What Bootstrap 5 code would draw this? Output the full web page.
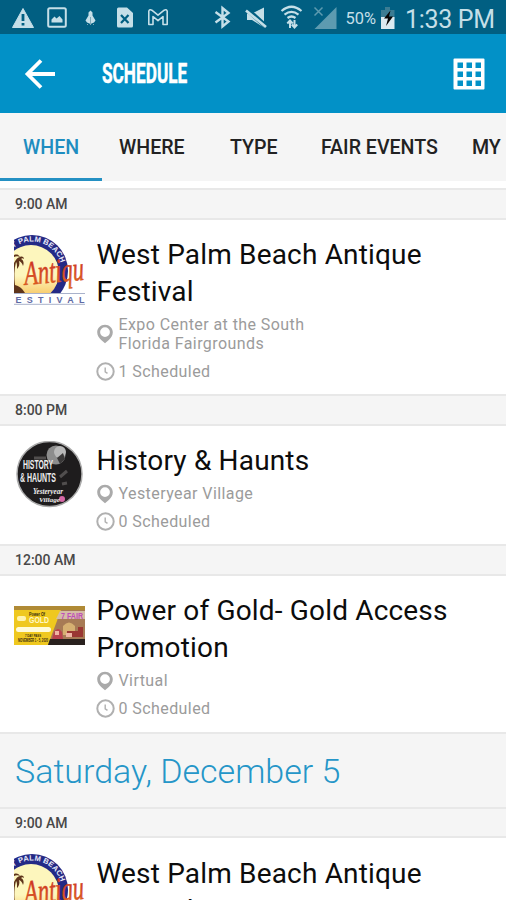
<!DOCTYPE html>
<html lang="en">
<head>
<meta charset="utf-8">
<meta name="viewport" content="width=device-width, initial-scale=1">
<title>Schedule</title>
<link href="https://cdn.jsdelivr.net/npm/bootstrap@5.3.0/dist/css/bootstrap.min.css" rel="stylesheet">
<style>
body{font-family:Roboto,"Open Sans",sans-serif;background:#fff;height:900px;overflow:hidden;color:#111}
svg{display:block;flex:none}
.status-bar{height:34px;background:#015f82;color:#c5dfe8}
.app-header{height:79px;background:#0291c7;color:#fff;padding:0 21px 0 24px}
.app-title{font-size:28px;font-weight:700;line-height:34px;width:86px;margin-left:46px}
.app-title span{display:inline-block;transform-origin:0 50%;transform:scaleX(.615);-webkit-text-stroke:.5px #fff}
.tabs{height:68px;background:#f5f5f5;font-size:19.6px;font-weight:500;white-space:nowrap;overflow:hidden;margin-bottom:7px}
.tab{color:#222;line-height:69px;height:68px;text-decoration:none;flex:none}
.tab.current{color:#1e8dc0;border-bottom:3px solid #2490c3;width:102px;padding-left:23px;margin-right:17px}
.t-where{width:111px}.t-type{width:91px}.t-fair{width:151px}
.time-bar{height:31.5px;background:#f5f5f5;border-top:2px solid #e8e8e8;border-bottom:2px solid #e8e8e8;font-size:14px;font-weight:500;line-height:28px;padding-left:15px;color:#484848}
.event{padding:16.5px 0 13.2px 14px}
.thumb{width:71px;margin-right:11.5px;margin-top:-1px}
.event-name{font-size:28px;line-height:37px;font-weight:400;letter-spacing:.17px;margin:0;color:#0c0c0c}
.meta{font-size:16px;line-height:19.5px;letter-spacing:.42px;color:#9b9b9b}
.place{margin-top:4.5px}.sched{margin-top:8px}
.day{height:75px;background:#f5f5f5;border-top:2px solid #e8e8e8;font-size:34px;font-weight:300;line-height:75px;color:#2596c8;padding-left:15px;margin:0}
.clock{margin-left:-1px}
</style>
</head>
<body>
<svg width="0" height="0" class="position-absolute" aria-hidden="true">
<defs>
<symbol id="pin" viewBox="0 0 16 20"><path fill-rule="evenodd" fill="#aaa" d="M8 .8C3.700.8.2 4 .2 8.300c0 3 1.700 5.500 4 7.600L8 19.300l3.800-3.400c2.300-2.100 4-4.600 4-7.600C15.800 4 12.300.8 8 .8zM8 3.200a4.900 4.900 0 1 1 0 9.800A4.900 4.900 0 0 1 8 3.200z"/></symbol>
<symbol id="clk" viewBox="0 0 19 19"><circle cx="9.500" cy="9.500" r="8.200" fill="none" stroke="#b0b0b0" stroke-width="2"/><path d="M9.200 5.500v4.300l2.300 1.600" fill="none" stroke="#b0b0b0" stroke-width="1.400"/></symbol>
<linearGradient id="sun" x1="0" y1="0" x2="0" y2="1"><stop offset=".55" stop-color="#fdf6bd"/><stop offset="1" stop-color="#f6bc50"/></linearGradient>
<linearGradient id="ink" x1="0" y1="0" x2="0" y2="1"><stop offset="0" stop-color="#c8202a"/><stop offset="1" stop-color="#e2701c"/></linearGradient>
<symbol id="antique" viewBox="0 0 71 70">
<clipPath id="disc"><rect width="71" height="58"/></clipPath>
<g clip-path="url(#disc)">
<circle cx="18" cy="36" r="36" fill="#242a86"/><circle cx="17" cy="38" r="28" fill="url(#sun)"/>
<path d="M0 28c2-4 4-6 6-6-2-1-4-1-6 0v-2c3-1 5 0 6 2 2-1 4 0 4 2-1-1-2-1-3 0 3 1 3 5 2 7-1-3-2-4-4-5 1 3 0 6-2 8 0-4 0-6-1-7-2 8-2 15-1 23 4 1 7 3 10 8H0z" fill="#5e341b"/>
</g>
<path id="arc" d="M-4.200 16.500A29.800 29.800 0 0 1 47.800 37" fill="none"/>
<text font-family="Liberation Sans" font-size="7.500" font-weight="700" fill="#e8eafa"><textPath href="#arc" startOffset="5" textLength="58">T PALM BEACH</textPath></text>
<text x="11" y="50" font-family="Liberation Serif" font-style="italic" font-size="34" textLength="60" lengthAdjust="spacingAndGlyphs" fill="url(#ink)" stroke="#d04422" stroke-width=".5" transform="rotate(-5 11 50)">Antiqu</text>
<path d="M0 58.500h71M0 69.300h71" stroke="#a9b2cb" stroke-width="1"/>
<text x="1.500" y="67.500" font-family="Liberation Sans" font-size="9" font-weight="700" textLength="69" fill="#5f6aa5">ESTIVAL</text>
</symbol>
</defs>
</svg>

<div class="status-bar">
<svg width="506" height="34" viewBox="0 0 506 34" fill="none" stroke="#c5dfe8">
<path d="M23 8.500L33.500 27.500h-21z" fill="#c5dfe8" stroke="#c5dfe8" stroke-linejoin="round"/><path d="M23 14v7M23 23v2.500" stroke="#015f82" stroke-width="2.800"/>
<rect x="48.200" y="8.200" width="17.600" height="18.600" rx="1.500" stroke-width="2"/><path d="M51.500 22.500v-3l3-3 2 2 3-2.500 3 3.500v3z" fill="#c5dfe8" stroke="none"/>
<path d="M90.500 10.500l2 2v3l3 5-1.500 2-3.500 1.500-3.500-1.500-1.500-2 3-5v-3z" fill="#c5dfe8" stroke="none"/><path d="M88 24l-1 1M93 24l1 1M90.500 17v8" stroke="#7fa9b9"/>
<path d="M117 9q0-1.500 1.500-1.500h8.500l6 5.500v13q0 1.500-1.500 1.500h-13q-1.500 0-1.500-1.500z" fill="#c5dfe8" stroke="none"/><path d="M121 15l7.500 8M128.500 15l-7.500 8" stroke="#015f82" stroke-width="2.200"/>
<path d="M148.800 24.500v-13.500q1-2 3-.8l6.200 5 6.200-5q2-1.200 3 .8v13.500h-4.200v-8l-5 4.200-5-4.200v8z" stroke-width="1.600" stroke-linejoin="round"/>
<path d="M215.500 12l13 9.500-6 5V8l6 5-13 9.500" stroke-width="2.400"/>
<path d="M247 13.500h5l12-6v20l-12-7.500h-5z" fill="#c5dfe8" stroke="none"/><path d="M246 8.500l20 18" stroke="#015f82" stroke-width="5"/><path d="M246 10.500l20 16.500" stroke-width="2.700"/>
<path d="M281.500 11q10-8.500 20 0M284.500 14.700q7-5.500 14 0M287.500 18q4-3 8 0" stroke-width="2.200"/><path d="M290 28v-7M287.300 23.500l2.700-3 2.700 3M294.500 20v7M291.800 24.500l2.700 3 2.700-3" stroke-width="2"/>
<path d="M336.500 7v22h-22z" fill="#5d9bb0" stroke="none"/><path d="M314.500 7.500l8 8M322.500 7.500l-8 8" stroke="#5d9bb0" stroke-width="1.500"/>
<path d="M381 10h4V7h5v3h4.500v9H381z" fill="#3b7c93" stroke="none"/><path d="M381 17h13.500v12H381z" fill="#dceaf0" stroke="none"/><path d="M390.500 10.500l-6.500 8h4l-2 7.500 7-9.500h-4z" fill="#050505" stroke="none"/>
<g fill="#c5dfe8" stroke="none" font-family="Roboto, sans-serif"><text x="345.500" y="24" font-size="17" textLength="30.500" lengthAdjust="spacingAndGlyphs">50%</text><text x="405" y="27.500" font-size="25" textLength="90">1:33 PM</text></g>
</svg>
</div>

<header class="app-header d-flex align-items-center">
<svg width="32" height="32" viewBox="0 0 32 32" fill="none" stroke="#fff" stroke-width="3.800"><path d="M31 16H4M17 2.500L3.500 16 17 29.500"/></svg>
<h1 class="app-title mb-0"><span>SCHEDULE</span></h1>
<svg class="ms-auto" width="32" height="32" viewBox="0 0 32 32"><path fill="#fff" fill-rule="evenodd" d="M1.500.5h29q1 0 1 1v29q0 1-1 1h-29q-1 0-1-1v-29q0-1 1-1zM4.500 4.500v5.500h5.500V4.500zM13.500 4.500v5.500h5.500V4.500zM22.500 4.500v5.500h5.500V4.500zM4.500 13.500v5.500h5.500v-5.500zM13.500 13.500v5.500h5.500v-5.500zM22.500 13.500v5.500h5.500v-5.500zM4.500 22.500V28h5.500v-5.500zM13.500 22.500V28h5.500v-5.500zM22.500 22.500V28h5.500v-5.500z"/></svg>
</header>

<nav class="tabs d-flex">
<a class="tab current">WHEN</a><a class="tab t-where">WHERE</a><a class="tab t-type">TYPE</a><a class="tab t-fair">FAIR EVENTS</a><a class="tab">MY</a>
</nav>

<main>
<div class="time-bar">9:00 AM</div>
<article class="event d-flex">
<svg class="thumb" height="70"><use href="#antique"/></svg>
<div><h2 class="event-name">West Palm Beach Antique<br>Festival</h2>
<div class="meta place d-flex align-items-center"><svg class="me-1" width="18" height="20"><use href="#pin" width="16" height="20"/></svg><span>Expo Center at the South<br>Florida Fairgrounds</span></div>
<div class="meta sched d-flex align-items-center"><svg class="clock me-1" width="19" height="19"><use href="#clk"/></svg><span>1 Scheduled</span></div></div>
</article>

<div class="time-bar">8:00 PM</div>
<article class="event d-flex">
<svg class="thumb" height="70" viewBox="0 0 71 70">
<circle cx="35.500" cy="33" r="32.500" fill="#1e1c1d" stroke="#aaa" stroke-width="1.500"/>
<circle cx="42" cy="14" r="9.500" fill="#8d8d8d"/><circle cx="46" cy="11" r="6" fill="#b9b9b9"/><path d="M43 17l6-5 2 6-5 5z" fill="#3b3939"/>
<path d="M46 36l7-6M48 43l5-1M20 17h12" stroke="#514e4e" stroke-width="3"/>
<circle cx="48" cy="58" r="3" fill="#d568a6"/>
<g fill="#eee" font-family="Liberation Sans" font-weight="700"><text x="9" y="28" font-size="12" textLength="30" lengthAdjust="spacingAndGlyphs">HISTORY</text><text x="6" y="41" font-size="12" textLength="36" lengthAdjust="spacingAndGlyphs">&amp; HAUNTS</text>
<g font-family="Liberation Serif" font-style="italic"><text x="19" y="53" font-size="8" textLength="30" lengthAdjust="spacingAndGlyphs">Yesteryear</text><text x="25" y="60.500" font-size="7" textLength="21" lengthAdjust="spacingAndGlyphs">Village</text></g></g>
</svg>
<div><h2 class="event-name">History &amp; Haunts</h2>
<div class="meta place d-flex align-items-center"><svg class="me-1" width="18" height="20"><use href="#pin" width="16" height="20"/></svg><span>Yesteryear Village</span></div>
<div class="meta sched d-flex align-items-center"><svg class="clock me-1" width="19" height="19"><use href="#clk"/></svg><span>0 Scheduled</span></div></div>
</article>

<div class="time-bar">12:00 AM</div>
<article class="event d-flex">
<svg class="thumb" height="70" viewBox="0 0 71 70">
<g transform="translate(0 15)"><path d="M0 0h71v39H0z" fill="#efc81f"/><path d="M47 4h24v35H34z" fill="#a77b55"/><path d="M0 0h71v4H0z" fill="#b08a35"/><path d="M36 33h35v6H34z" fill="#29211e"/>
<path d="M46 5h25v8H42z" fill="#d5bda5"/><path d="M40 26q4-6 8 0l1 7H38z" fill="#b9424d"/><path d="M49 20q6-7 12 0v9H49z" fill="#d6b071"/><path d="M53 25h16v6H53zM64 21h5v5h-5z" fill="#9a3733"/><path d="M41 25h4v4h-4zM52 27h6v4h-6z" fill="#eeb5a2"/>
<rect x="2" y="21" width="35" height="5" rx="2.500" fill="#fffbd8"/><rect x="3" y="10" width="9" height="5" rx="2" fill="#fff3ad"/>
<g font-family="Liberation Sans" font-weight="700"><text x="15" y="9.500" font-size="4.500" fill="#332a10" textLength="16" lengthAdjust="spacingAndGlyphs">Power Of</text><text x="15" y="17" font-size="9" fill="#fff8c5" textLength="20" lengthAdjust="spacingAndGlyphs">GOLD</text><text x="47" y="13" font-size="9" fill="#c04bbb" textLength="22" lengthAdjust="spacingAndGlyphs">7 FAIR</text><text x="11" y="31" font-size="4" fill="#332a10" textLength="16" lengthAdjust="spacingAndGlyphs">7 DAY PASS</text><text x="4" y="36" font-size="5" fill="#332a10" textLength="30" lengthAdjust="spacingAndGlyphs">NOVEMBER 1 - 5, 2020</text></g></g>
</svg>
<div><h2 class="event-name">Power of Gold- Gold Access<br>Promotion</h2>
<div class="meta place d-flex align-items-center"><svg class="me-1" width="18" height="20"><use href="#pin" width="16" height="20"/></svg><span>Virtual</span></div>
<div class="meta sched d-flex align-items-center"><svg class="clock me-1" width="19" height="19"><use href="#clk"/></svg><span>0 Scheduled</span></div></div>
</article>

<h2 class="day">Saturday, December 5</h2>
<div class="time-bar">9:00 AM</div>
<article class="event d-flex">
<svg class="thumb" height="70"><use href="#antique"/></svg>
<div><h2 class="event-name">West Palm Beach Antique<br>Festival</h2></div>
</article>
</main>
<script src="https://cdn.jsdelivr.net/npm/bootstrap@5.3.0/dist/js/bootstrap.bundle.min.js"></script>
</body>
</html>
